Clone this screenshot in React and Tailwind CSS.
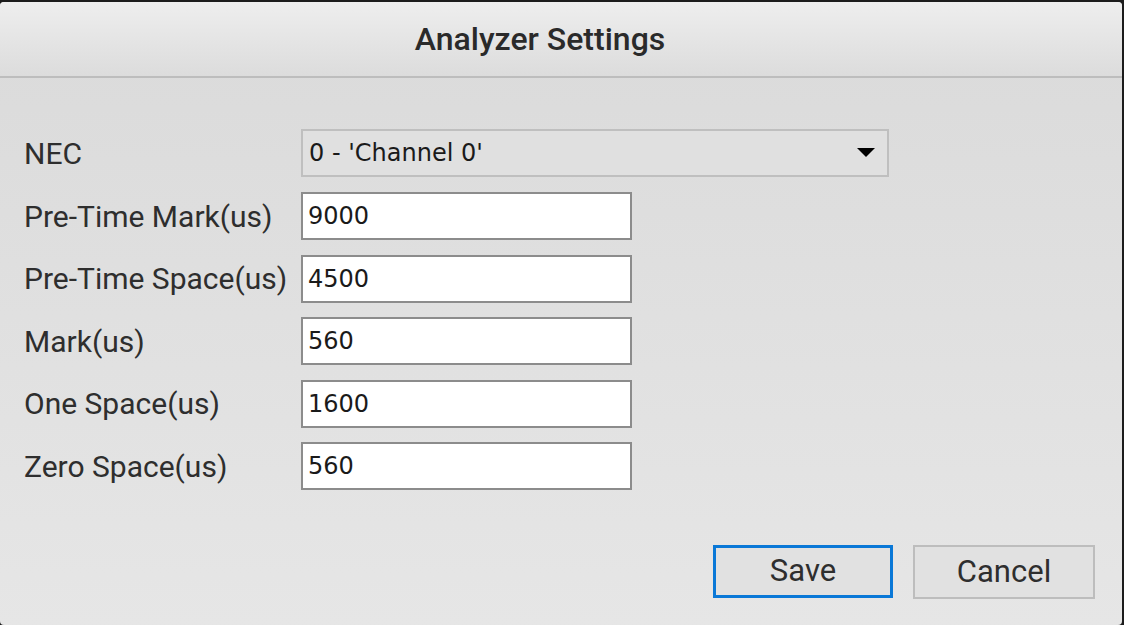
import React from "react";

function Field({ value }) {
  return (
    <div className="h-[48px] w-[331px] bg-white border-2 border-[#8c8c8c] flex items-center pl-[5px] text-[24px] text-[#1a1a1a] font-['DejaVu_Sans',sans-serif]">
      {value}
    </div>
  );
}

export default function App() {
  const rows = [
    ["Pre-Time Mark(us)", "9000"],
    ["Pre-Time Space(us)", "4500"],
    ["Mark(us)", "560"],
    ["One Space(us)", "1600"],
    ["Zero Space(us)", "560"],
  ];
  return (
    <div className="w-[1124px] h-[625px] bg-[#1c1c1c] pt-[2px] pr-[2px] overflow-hidden">
      <div className="w-full h-full rounded-[4px] overflow-hidden flex flex-col bg-gradient-to-b from-[#dadada] to-[#e6e6e6] font-['Roboto',sans-serif]">
        <div className="h-[76px] shrink-0 bg-gradient-to-b from-[#eeeeee] to-[#dcdcdc] border-b-2 border-[#bdbdbd] flex items-center justify-center pr-[42px]">
          <span className="text-[32px] font-medium text-[#2a2a2a]">Analyzer Settings</span>
        </div>
        <div className="flex-1 flex flex-col pl-[24px] pt-[51px]">
          <div className="flex items-center h-[48px]">
            <div className="w-[277px] text-[30px] text-[#2e2e2e]">NEC</div>
            <div className="h-[48px] w-[588px] bg-[#e0e0e0] border-2 border-[#bfbfbf] flex items-center justify-between pl-[6px] pr-[12px]">
              <span className="text-[24px] text-[#1a1a1a] font-['DejaVu_Sans',sans-serif]">0 - 'Channel 0'</span>
              <svg width="18" height="10" viewBox="0 0 18 10"><polygon points="0,0 18,0 9,9" fill="#000" /></svg>
            </div>
          </div>
          <div className="flex flex-col gap-[14.5px] mt-[15px]">
            {rows.map(([l, v]) => (
              <div key={l} className="flex items-center h-[48px]">
                <div className="w-[277px] text-[30px] text-[#2e2e2e] whitespace-nowrap">{l}</div>
                <Field value={v} />
              </div>
            ))}
          </div>
          <div className="flex-1" />
          <div className="flex justify-end gap-[20px] pr-[27px] pb-[26px]">
            <button className="w-[180px] h-[53px] bg-[#e1e1e1] border-[3px] border-[#0a78d7] text-[31px] text-[#2e2e2e]">Save</button>
            <button className="w-[182px] h-[54px] bg-[#e1e1e1] border-2 border-[#bdbdbd] text-[31px] text-[#2e2e2e]">Cancel</button>
          </div>
        </div>
      </div>
    </div>
  );
}
